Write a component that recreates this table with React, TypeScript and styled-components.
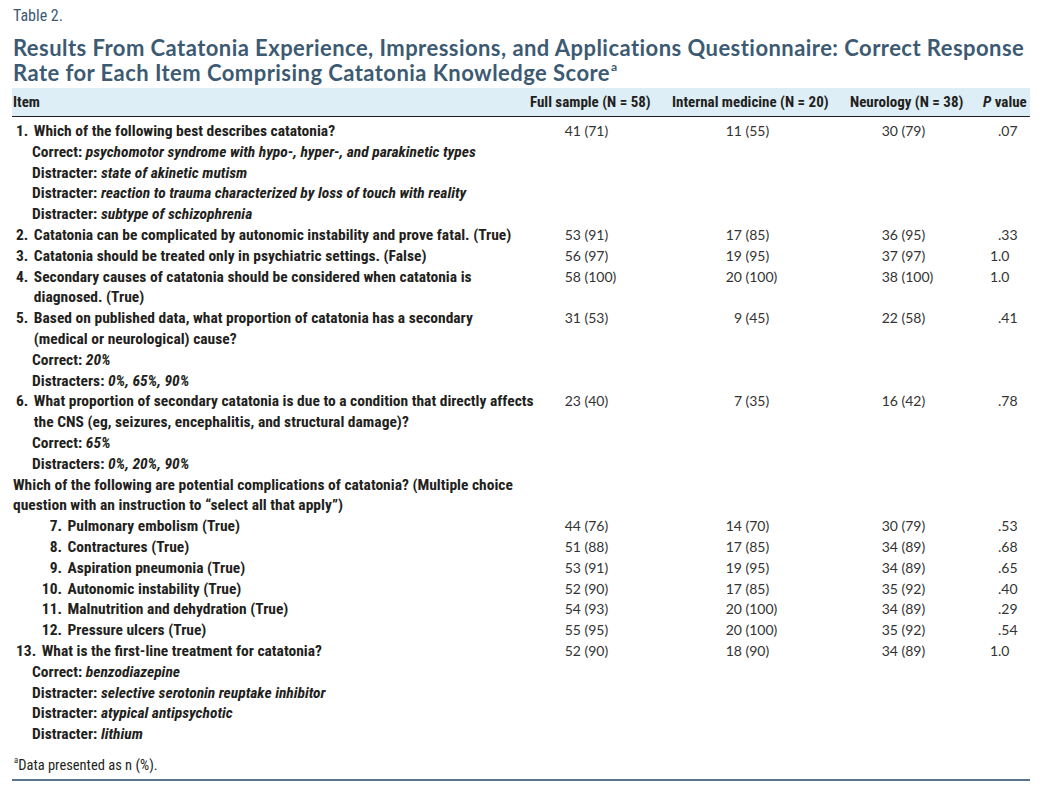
import React from 'react';
import styled, {createGlobalStyle} from 'styled-components';

const GlobalStyle = createGlobalStyle`
  html, body {
    margin: 0;
    padding: 0;
    background: #ffffff;
  }
`;

const condensed = `"Roboto Condensed", "DejaVu Sans Condensed", sans-serif`;
const figures = `Lato, "Open Sans", sans-serif`;
const slate = '#3d5a73';
const ink = '#231f20';

type Values = [string, string, string, string];

interface Question {
  kind: 'question';
  num: string;
  text: string;
  subs?: [string, string][];
  values?: Values;
}

interface Group {
  kind: 'group';
  text: string;
}

interface SubItem {
  kind: 'sub';
  num: string;
  text: string;
  values: Values;
}

type Row = Question | Group | SubItem;

// line breaks follow the typeset table
const rows: Row[] = [
  {
    kind: 'question', num: '1.', text: 'Which of the following best describes catatonia?',
    subs: [
      ['Correct:', 'psychomotor syndrome with hypo-, hyper-, and parakinetic types'],
      ['Distracter:', 'state of akinetic mutism'],
      ['Distracter:', 'reaction to trauma characterized by loss of touch with reality'],
      ['Distracter:', 'subtype of schizophrenia'],
    ],
    values: ['41 (71)', '11 (55)', '30 (79)', '.07'],
  },
  {
    kind: 'question', num: '2.', text: 'Catatonia can be complicated by autonomic instability and prove fatal. (True)',
    values: ['53 (91)', '17 (85)', '36 (95)', '.33'],
  },
  {
    kind: 'question', num: '3.', text: 'Catatonia should be treated only in psychiatric settings. (False)',
    values: ['56 (97)', '19 (95)', '37 (97)', '1.0'],
  },
  {
    kind: 'question', num: '4.', text: 'Secondary causes of catatonia should be considered when catatonia is\ndiagnosed. (True)',
    values: ['58 (100)', '20 (100)', '38 (100)', '1.0'],
  },
  {
    kind: 'question', num: '5.', text: 'Based on published data, what proportion of catatonia has a secondary\n(medical or neurological) cause?',
    subs: [
      ['Correct:', '20%'],
      ['Distracters:', '0%, 65%, 90%'],
    ],
    values: ['31 (53)', '9 (45)', '22 (58)', '.41'],
  },
  {
    kind: 'question', num: '6.', text: 'What proportion of secondary catatonia is due to a condition that directly affects\nthe CNS (eg, seizures, encephalitis, and structural damage)?',
    subs: [
      ['Correct:', '65%'],
      ['Distracters:', '0%, 20%, 90%'],
    ],
    values: ['23 (40)', '7 (35)', '16 (42)', '.78'],
  },
  {
    kind: 'group',
    text: 'Which of the following are potential complications of catatonia? (Multiple choice\nquestion with an instruction to \u201cselect all that apply\u201d)',
  },
  {kind: 'sub', num: '7.', text: 'Pulmonary embolism (True)', values: ['44 (76)', '14 (70)', '30 (79)', '.53']},
  {kind: 'sub', num: '8.', text: 'Contractures (True)', values: ['51 (88)', '17 (85)', '34 (89)', '.68']},
  {kind: 'sub', num: '9.', text: 'Aspiration pneumonia (True)', values: ['53 (91)', '19 (95)', '34 (89)', '.65']},
  {kind: 'sub', num: '10.', text: 'Autonomic instability (True)', values: ['52 (90)', '17 (85)', '35 (92)', '.40']},
  {kind: 'sub', num: '11.', text: 'Malnutrition and dehydration (True)', values: ['54 (93)', '20 (100)', '34 (89)', '.29']},
  {kind: 'sub', num: '12.', text: 'Pressure ulcers (True)', values: ['55 (95)', '20 (100)', '35 (92)', '.54']},
  {
    kind: 'question', num: '13.', text: 'What is the first-line treatment for catatonia?',
    subs: [
      ['Correct:', 'benzodiazepine'],
      ['Distracter:', 'selective serotonin reuptake inhibitor'],
      ['Distracter:', 'atypical antipsychotic'],
      ['Distracter:', 'lithium'],
    ],
    values: ['52 (90)', '18 (90)', '34 (89)', '1.0'],
  },
];

// where each value column starts its right-aligned lead part, and how wide that part is
const valueColumns = [
  {offset: 23, lead: 30, gap: 3.5},
  {offset: 50, lead: 30, gap: 3.5},
  {offset: 28, lead: 30, gap: 3.5},
  {offset: 10, lead: 15, gap: 0},
];

const Page = styled.div`
  width: 1018px;
  padding: 6px 12px 0;
  color: ${ink};
`;

const TableLabel = styled.div`
  font-family: ${condensed};
  font-size: 16px;
  line-height: 20px;
  color: ${slate};
  padding-left: 1px;
`;

const Title = styled.h1`
  margin: 10px 0 3px;
  padding-left: 1px;
  font-family: Lato, "Open Sans", sans-serif;
  font-weight: 700;
  font-size: 22px;
  letter-spacing: 0.45px;
  line-height: 24.5px;
  color: ${slate};
`;

const Sup = styled.sup`
  font-size: 0.55em;
  vertical-align: 0.75em;
  line-height: 0;
  margin-left: 1px;
`;

const Grid = styled.div`
  display: grid;
  grid-template-columns: 516px 134px 178px 133px 57px;
`;

const HeadRow = styled(Grid)`
  background: #ddeef7;
  height: 27.5px;
  align-items: center;
  border-bottom: 1.5px solid ${ink};
  font-family: ${condensed};
  font-weight: 700;
  font-size: 15px;
`;

const HeadCell = styled.div<{ $pad: number }>`
  padding-left: ${p => p.$pad}px;
  white-space: nowrap;
`;

const Body = styled.div`
  padding-top: 4.5px;
`;

const DataRow = styled(Grid)`
  line-height: 20.8px;
`;

const ItemCell = styled.div`
  margin-right: -16px;
  font-family: ${condensed};
  font-weight: 700;
  font-size: 15.5px;
  white-space: pre-line;
`;

const QuestionLine = styled.div<{ $indent: number; $numWidth?: number }>`
  display: flex;
  gap: 5.5px;
  padding-left: ${p => p.$indent}px;

  & > span:first-child {
    flex: none;
    ${p => (p.$numWidth ? `width: ${p.$numWidth}px; text-align: right;` : '')}
  }
`;

const GroupLine = styled.div`
  padding-left: 1px;
`;

const SubLine = styled.div`
  padding-left: 20px;

  em {
    font-style: italic;
    font-weight: 700;
  }
`;

const ValueCell = styled.div<{ $offset: number; $gap: number }>`
  display: flex;
  gap: ${p => p.$gap}px;
  padding-left: ${p => p.$offset}px;
  font-family: ${figures};
  font-size: 14px;
  color: #333333;
  white-space: nowrap;
`;

const Lead = styled.span<{ $width: number }>`
  width: ${p => p.$width}px;
  text-align: right;
`;

const Footnote = styled.div`
  margin-top: 11px;
  padding-left: 1px;
  font-family: ${condensed};
  font-size: 14.5px;
  line-height: 20px;

  sup {
    font-size: 0.6em;
  }
`;

const Rule = styled.div`
  margin-top: 3px;
  height: 2px;
  background: #5b7590;
`;

const splitValue = (value: string, i: number): [string, string] => {
  const at = i === 3 ? value.indexOf('.') : value.indexOf(' ');
  return i === 3 ? [value.slice(0, at), value.slice(at)] : [value.slice(0, at), value.slice(at + 1)];
};

const ValueCells = ({values}: { values?: Values }) => (
  <>
    {valueColumns.map((col, i) => {
      if (!values) {
        return <div key={i}/>;
      }
      const [lead, rest] = splitValue(values[i], i);
      return (
        <ValueCell key={i} $offset={col.offset} $gap={col.gap}>
          <Lead $width={col.lead}>{lead}</Lead>
          <span>{rest}</span>
        </ValueCell>
      );
    })}
  </>
);

const TableRow = ({row}: { row: Row }) => {
  if (row.kind === 'group') {
    return (
      <DataRow>
        <ItemCell><GroupLine>{row.text}</GroupLine></ItemCell>
        <ValueCells/>
      </DataRow>
    );
  }
  if (row.kind === 'sub') {
    return (
      <DataRow>
        <ItemCell>
          <QuestionLine $indent={24} $numWidth={26}>
            <span>{row.num}</span>
            <span>{row.text}</span>
          </QuestionLine>
        </ItemCell>
        <ValueCells values={row.values}/>
      </DataRow>
    );
  }
  return (
    <DataRow>
      <ItemCell>
        <QuestionLine $indent={4}>
          <span>{row.num}</span>
          <span>{row.text}</span>
        </QuestionLine>
        {row.subs?.map(([label, value], i) => (
          <SubLine key={i}>{label} <em>{value}</em></SubLine>
        ))}
      </ItemCell>
      <ValueCells values={row.values}/>
    </DataRow>
  );
};

const App = () => (
  <Page>
    <GlobalStyle/>
    <TableLabel>Table 2.</TableLabel>
    <Title>
      Results From Catatonia Experience, Impressions, and Applications Questionnaire: Correct Response
      Rate for Each Item Comprising Catatonia Knowledge Score<Sup>a</Sup>
    </Title>
    <HeadRow>
      <HeadCell $pad={1}>Item</HeadCell>
      <HeadCell $pad={2}>Full sample (N = 58)</HeadCell>
      <HeadCell $pad={10}>Internal medicine (N = 20)</HeadCell>
      <HeadCell $pad={10}>Neurology (N = 38)</HeadCell>
      <HeadCell $pad={10}><em>P</em> value</HeadCell>
    </HeadRow>
    <Body>
      {rows.map((row, i) => <TableRow key={i} row={row}/>)}
    </Body>
    <Footnote><Sup>a</Sup>Data presented as n (%).</Footnote>
    <Rule/>
  </Page>
);

export default App;
